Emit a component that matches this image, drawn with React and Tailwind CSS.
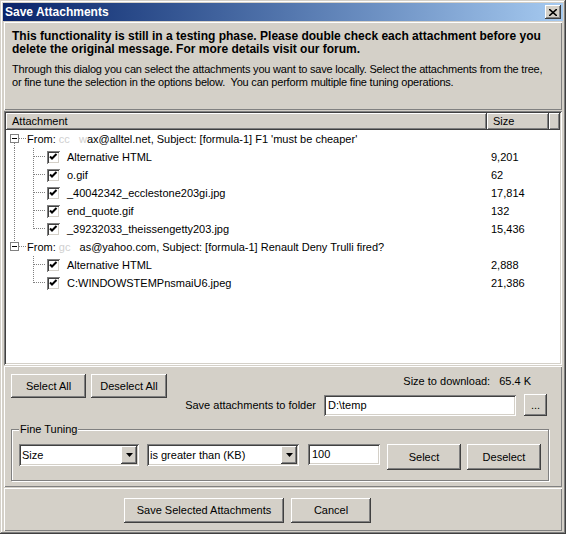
import React from "react";

const btn =
  "bg-[#d4d0c8] shadow-[inset_-1px_-1px_#404040,inset_1px_1px_#fff,inset_-2px_-2px_#808080,inset_2px_2px_#d4d0c8]";
const sunken =
  "bg-white shadow-[inset_1px_1px_#808080,inset_-1px_-1px_#fff,inset_2px_2px_#404040,inset_-2px_-2px_#d4d0c8]";
const panel = "bg-[#d4d0c8] shadow-[inset_1px_1px_#fff,inset_-1px_-1px_#808080]";

const groups = [
  {
    pre: "From: ",
    hidden: "cc   w",
    post: "ax@alltel.net, Subject: [formula-1] F1 'must be cheaper'",
    items: [
      ["Alternative HTML", "9,201"],
      ["o.gif", "62"],
      ["_40042342_ecclestone203gi.jpg", "17,814"],
      ["end_quote.gif", "132"],
      ["_39232033_theissengetty203.jpg", "15,436"]
    ]
  },
  {
    pre: "From: ",
    hidden: "gc   ",
    post: "as@yahoo.com, Subject: [formula-1] Renault Deny Trulli fired?",
    items: [
      ["Alternative HTML", "2,888"],
      ["C:WINDOWSTEMPnsmaiU6.jpeg", "21,386"]
    ]
  }
];

function RootGutter({ first }) {
  return (
    <svg width="21" height="18" className="shrink-0">
      {first ? (
        <line x1="8.5" y1="13" x2="8.5" y2="18" stroke="#808080" strokeDasharray="1 1" />
      ) : (
        <line x1="8.5" y1="0" x2="8.5" y2="4" stroke="#808080" strokeDasharray="1 1" />
      )}
      <line x1="13" y1="8.5" x2="20" y2="8.5" stroke="#808080" strokeDasharray="1 1" />
      <rect x="4.5" y="4.5" width="8" height="8" fill="#fff" stroke="#808080" />
      <line x1="6" y1="8.5" x2="11" y2="8.5" stroke="#000" />
    </svg>
  );
}

function ChildGutter({ rootLine, last }) {
  return (
    <svg width="41" height="18" className="shrink-0">
      {rootLine && (
        <line x1="8.5" y1="0" x2="8.5" y2="18" stroke="#808080" strokeDasharray="1 1" />
      )}
      <line x1="27.5" y1="0" x2="27.5" y2={last ? 9 : 18} stroke="#808080" strokeDasharray="1 1" />
      <line x1="28" y1="8.5" x2="40" y2="8.5" stroke="#808080" strokeDasharray="1 1" />
    </svg>
  );
}

function Check() {
  return (
    <span className={`w-[13px] h-[13px] shrink-0 flex items-center justify-center ${sunken}`}>
      <svg width="13" height="13">
        <polyline points="3,5.5 5,7.5 9.5,3" fill="none" stroke="#000" strokeWidth="2" />
      </svg>
    </span>
  );
}

function Combo({ value, w }) {
  return (
    <div className={`h-[22px] ${w} flex items-center ${sunken} pl-[3px] pr-[2px]`}>
      <span className="flex-1 leading-[14px]">{value}</span>
      <span className={`w-[16px] h-[18px] flex items-center justify-center ${btn}`}>
        <svg width="7" height="4">
          <polygon points="0,0 7,0 3.5,4" fill="#000" />
        </svg>
      </span>
    </div>
  );
}

export default function App() {
  return (
    <div className="w-[566px] h-[534px] bg-[#d4d0c8] p-[3px] flex flex-col font-['Liberation_Sans',Arial,sans-serif] text-[11px] text-black shadow-[inset_-1px_-1px_#404040,inset_1px_1px_#d4d0c8,inset_-2px_-2px_#808080,inset_2px_2px_#fff]">
      {/* title bar */}
      <div className="h-[18px] shrink-0 flex items-center bg-linear-to-r from-[#0a246a] to-[#a6caf0] pl-[2px] pr-[2px]">
        <span className="flex-1 text-white font-bold text-[12px] leading-[18px]">Save Attachments</span>
        <span className={`w-[16px] h-[14px] flex items-center justify-center ${btn}`}>
          <svg width="8" height="7">
            <path d="M0 0 L8 7 M8 0 L0 7" stroke="#000" strokeWidth="1.6" />
          </svg>
        </span>
      </div>

      <div className="flex-1 flex flex-col gap-[1px] mt-[1px] px-[1px]">
        {/* info */}
        <div className={`h-[88px] shrink-0 ${panel} px-[8px] pt-[8px]`}>
          <p className="font-bold text-[12px] leading-[13px] whitespace-nowrap">
            This functionality is still in a testing phase. Please double check each attachment before you
            <br />
            delete the original message. For more details visit our forum.
          </p>
          <p className="mt-[7px] leading-[13px] tracking-[-0.2px]">
            Through this dialog you can select the attachments you want to save locally. Select the attachments from
            the tree, or fine tune the selection in the options below.&nbsp; You can perform multiple fine tuning
            operations.
          </p>
        </div>

        {/* tree list */}
        <div className={`h-[254px] shrink-0 ${sunken} p-[2px] flex flex-col`}>
          <div className="h-[17px] flex shrink-0">
            <div className={`w-[481px] ${btn} pl-[6px] leading-[17px]`}>Attachment</div>
            <div className={`w-[62px] ${btn} pl-[6px] leading-[17px]`}>Size</div>
            <div className={`flex-1 ${btn}`} />
          </div>
          <div className="flex-1 bg-white">
            {groups.map((g, gi) => (
              <div key={gi}>
                <div className="h-[18px] flex items-center">
                  <RootGutter first={gi === 0} />
                  <span className="whitespace-pre">
                    {g.pre}
                    <span className="text-[#d0d0d0]">{g.hidden}</span>
                    {g.post}
                  </span>
                </div>
                {g.items.map(([name, size], i) => (
                  <div key={name} className="h-[18px] flex items-center">
                    <div className="w-[481px] flex items-center">
                      <ChildGutter rootLine={gi === 0} last={i === g.items.length - 1} />
                      <Check />
                      <span className="ml-[7px]">{name}</span>
                    </div>
                    <span className="pl-[4px]">{size}</span>
                  </div>
                ))}
              </div>
            ))}
          </div>
        </div>

        {/* options */}
        <div className={`h-[121px] shrink-0 ${panel} pl-[7px] pr-[15px] pt-[8px] flex flex-col`}>
          <div className="flex h-[42px]">
            <div className="flex gap-[5px] items-start">
              <button className={`w-[75px] h-[24px] ${btn}`}>Select All</button>
              <button className={`w-[76px] h-[24px] ${btn}`}>Deselect All</button>
            </div>
            <div className="flex-1 flex flex-col items-end">
              <div className="h-[15px] flex items-center pr-[16px]">
                <span>Size to download:</span>
                <span className="ml-[9px]">65.4 K</span>
              </div>
              <div className="mt-[5px] flex items-center">
                <span>Save attachments to folder</span>
                <div className={`ml-[8px] w-[192px] h-[21px] ${sunken} pl-[4px] leading-[21px]`}>D:\temp</div>
                <button className={`ml-[8px] w-[23px] h-[22px] ${btn} leading-[18px]`}>...</button>
              </div>
            </div>
          </div>
          <fieldset className="mt-[7px] w-[536px] h-[58px] border border-[#808080] shadow-[inset_1px_1px_#fff,1px_1px_#fff] px-[7px]">
            <legend className="px-[1px] bg-[#d4d0c8] leading-[13px]">Fine Tuning</legend>
            <div className="flex items-start mt-[8px]">
              <Combo value="Size" w="w-[120px]" />
              <div className="ml-[8px]">
                <Combo value="is greater than (KB)" w="w-[152px]" />
              </div>
              <div className={`ml-[9px] w-[72px] h-[21px] ${sunken} pl-[4px] leading-[21px]`}>100</div>
              <button className={`ml-[7px] w-[74px] h-[26px] ${btn}`}>Select</button>
              <button className={`ml-[6px] w-[74px] h-[26px] ${btn}`}>Deselect</button>
            </div>
          </fieldset>
        </div>

        {/* footer buttons */}
        <div className={`flex-1 ${panel} pl-[120px] pt-[10px] flex items-start gap-[7px]`}>
          <button className={`w-[160px] h-[25px] ${btn}`}>Save Selected Attachments</button>
          <button className={`w-[80px] h-[25px] ${btn}`}>Cancel</button>
        </div>
      </div>
    </div>
  );
}
